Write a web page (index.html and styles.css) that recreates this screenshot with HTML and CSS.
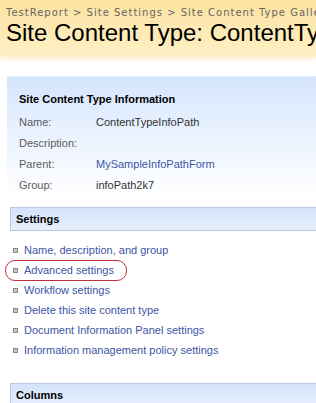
FILE: index.html
```html
<!DOCTYPE html>
<html lang="en">
<head>
    <meta charset="UTF-8">
    <title>Site Content Type</title>
    <link rel="stylesheet" href="styles.css">
</head>
<body>
    <div class="page-head">
        <div class="crumbs">TestReport &gt; Site Settings &gt; Site Content Type Gallery &gt; ContentTypeInfoPath</div>
        <h1 class="title">Site Content Type: ContentTypeInfoPath</h1>
    </div>

    <div class="info-box">
        <h2>Site Content Type Information</h2>
        <table class="info">
            <tr><td class="label">Name:</td><td>ContentTypeInfoPath</td></tr>
            <tr><td class="label">Description:</td><td></td></tr>
            <tr><td class="label">Parent:</td><td><a href="#">MySampleInfoPathForm</a></td></tr>
            <tr><td class="label">Group:</td><td>infoPath2k7</td></tr>
        </table>
    </div>

    <div class="section-bar">Settings</div>
    <ul class="links">
        <li><a href="#">Name, description, and group</a></li>
        <li class="marked"><a href="#">Advanced settings</a></li>
        <li><a href="#">Workflow settings</a></li>
        <li><a href="#">Delete this site content type</a></li>
        <li><a href="#">Document Information Panel settings</a></li>
        <li><a href="#">Information management policy settings</a></li>
    </ul>

    <div class="section-bar columns">Columns</div>
</body>
</html>
```

FILE: styles.css
```css
body {
    margin: 0;
    font-family: "Liberation Sans", Arial, sans-serif;
    font-size: 11px;
    color: #333;
    background: #fff;
    overflow: hidden;
}

a {
    color: #3d55a5;
    text-decoration: none;
}

/* Title area */
.page-head {
    height: 57px;
    padding-left: 6px;
    background: linear-gradient(#fce2a0, #fff0c6);
    box-shadow: 0 3px 4px #fff4d8;
    white-space: nowrap;
    overflow: hidden;
}

.crumbs {
    padding-top: 6px;
    font-family: "DejaVu Sans", Verdana, sans-serif;
    font-size: 10px;
    line-height: 13px;
    color: #666;
    letter-spacing: 1px;
}

.title {
    margin: 0;
    font-family: "Liberation Sans", Arial, sans-serif;
    font-weight: normal;
    font-size: 24px;
    line-height: 28px;
    color: #000;
}

/* Information box */
.info-box {
    margin: 19px 0 0 7px;
    padding: 14px 12px 0;
    background: linear-gradient(#d5e5fd, #fff);
    border-top: 1px solid #e2ecfb;
}

.info-box h2 {
    margin: 0 0 4px;
    font-size: 11px;
    font-weight: bold;
    color: #000;
    line-height: 16px;
}

.info {
    border-collapse: collapse;
}

.info td {
    padding: 0;
    height: 21px;
    vertical-align: middle;
}

.info .label {
    width: 77px;
    color: #5c5c5c;
}

/* Section bars */
.section-bar {
    margin: 12px 0 0 10px;
    height: 22px;
    line-height: 22px;
    padding-left: 5px;
    font-weight: bold;
    color: #000;
    background: linear-gradient(#d3e3fc, #e6effd);
    border: 1px solid #b9c9e4;
    border-right: none;
}

.section-bar.columns {
    margin-top: 23px;
}

/* Link list */
.links {
    list-style: none;
    margin: 9px 0 0;
    padding: 0 0 0 13px;
}

.links li {
    height: 20px;
    line-height: 20px;
    display: flex;
    align-items: center;
}

.links li::before {
    content: "";
    width: 3px;
    height: 3px;
    margin-right: 6px;
    background: #c6c6c6;
    border: 1px solid #8a8a8a;
}

.links li.marked {
    position: relative;
}

.links li.marked::after {
    content: "";
    position: absolute;
    left: -8px;
    top: 0;
    width: 120px;
    height: 19px;
    border: 1px solid #c0303a;
    border-radius: 10px;
}
```
